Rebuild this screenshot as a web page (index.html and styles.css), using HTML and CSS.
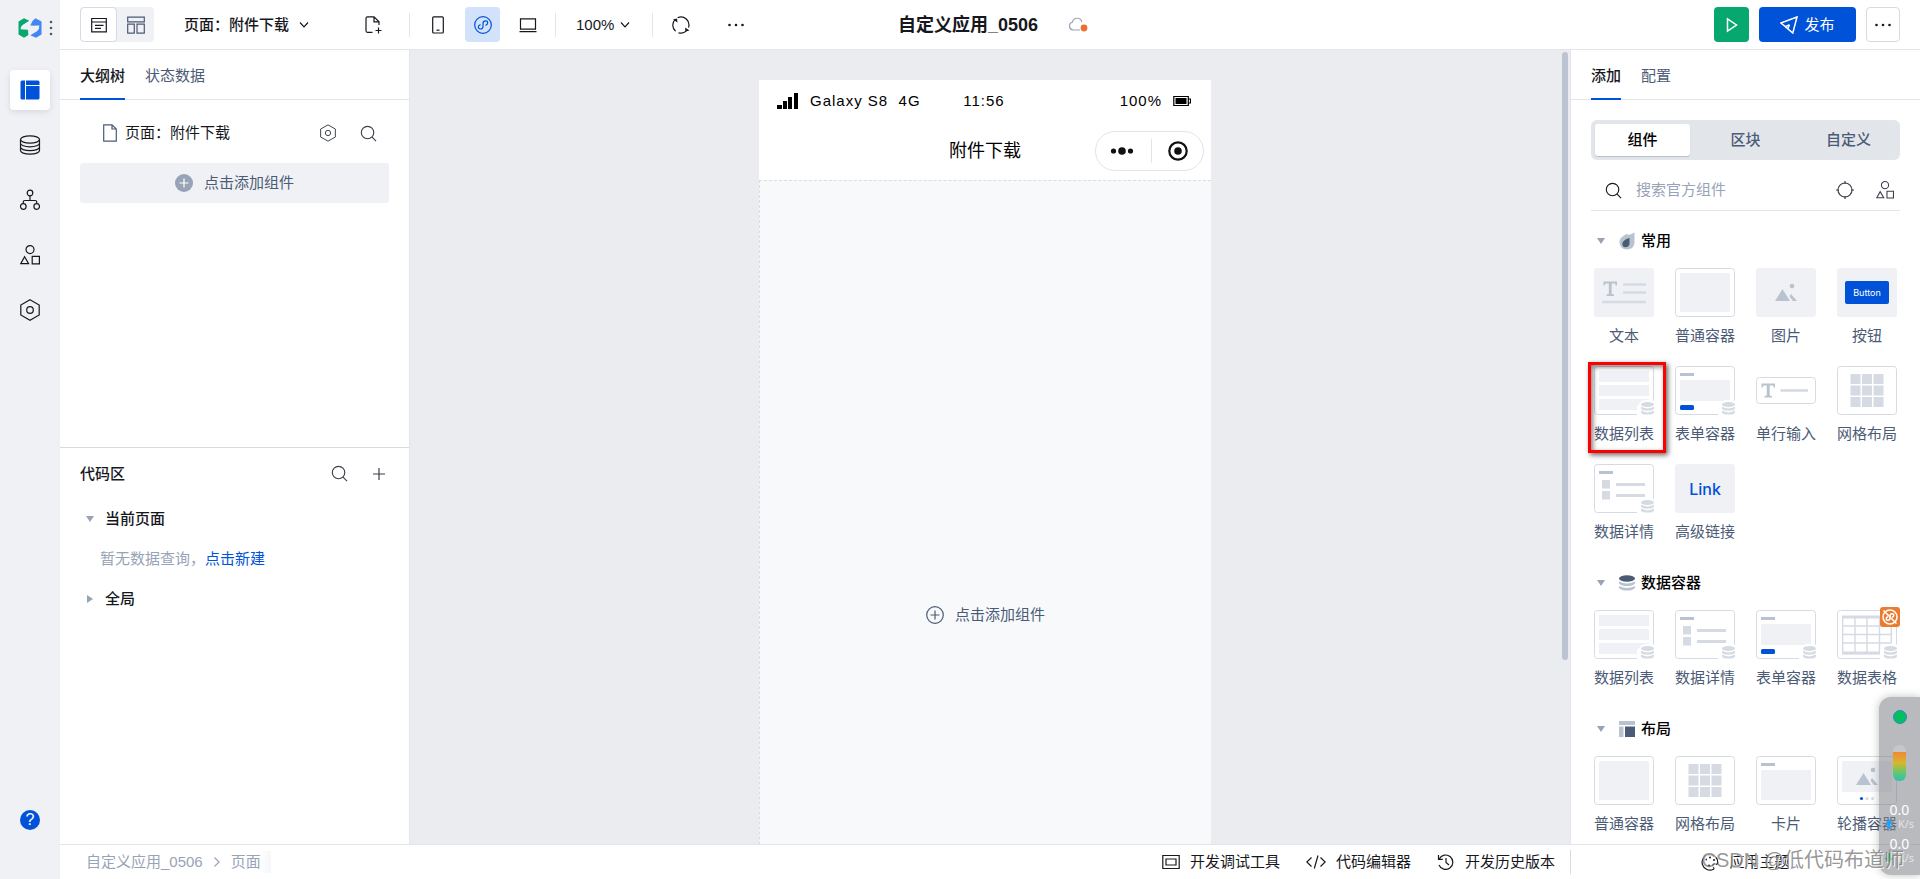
FILE: index.html
```html
<!DOCTYPE html>
<html lang="zh-CN">
<head>
<meta charset="utf-8">
<meta name="viewport" content="width=device-width, initial-scale=1">
<title>自定义应用_0506</title>
<link rel="stylesheet" href="styles.css">
</head>
<body>
<svg class="sprite" aria-hidden="true">
  <symbol id="search" viewBox="0 0 18 18"><circle cx="8" cy="8" r="6.6"/><path d="M12.8 12.8 17 17"/></symbol>
  <symbol id="shapes" viewBox="0 0 20 20"><circle cx="10" cy="4.6" r="4"/><path d="M4.6 11.8 8.6 18.6H.8zM12.2 11.4h7.2v7.4h-7.2z"/></symbol>
  <symbol id="hexagon" viewBox="0 0 20 22"><path d="M10 .8 19.2 6v10L10 21.2.8 16V6z"/><circle cx="10" cy="11" r="3.3"/></symbol>
  <symbol id="down" viewBox="0 0 10 8"><path d="M1 1.5 5 5.8 9 1.5"/></symbol>
  <symbol id="plus" viewBox="0 0 12 12"><path d="M6 0v12M0 6h12"/></symbol>
  <symbol id="dots" viewBox="0 0 16 4"><g fill="currentColor" stroke="none"><circle cx="1.5" cy="2" r="1.3"/><circle cx="8" cy="2" r="1.3"/><circle cx="14.5" cy="2" r="1.3"/></g></symbol>

  <symbol id="db-badge" viewBox="0 0 18 16">
    <path fill="#fff" d="M3 3C4-1 18-1 18 2v14H0V6z"/>
    <g fill="#d5dae3"><ellipse cx="10.500" cy="4.500" rx="6.500" ry="2.600"/><path d="M4 6.700q6.500 3.600 13 0v1.800q-1 2.200-6.500 2.200T4 8.500zM4 10.600q6.500 3.600 13 0v1.800q-1 2.200-6.500 2.200T4 12.400z"/></g>
  </symbol>
  <symbol id="t-text" viewBox="0 0 60 49"><rect width="60" height="49" rx="3" fill="#f0f1f5"/><path fill="#b9c3cf" d="M9.500 13.500h13.500v4h-1.200l-.8-2h-3.300V26l2.300.6V28h-7.500v-1.400l2.300-.6V15.500h-3.300l-.8 2H9.500z"/><path stroke="#d5dae3" stroke-width="2.600" d="M29 16.500h23M29 24.500h23M8 34h44"/></symbol>
  <symbol id="t-box" viewBox="0 0 60 49"><rect class="frame" x=".5" y=".5" width="59" height="48" rx="3"/><rect x="5" y="5" width="50" height="39" rx="1.500" fill="#f0f1f5"/></symbol>
  <symbol id="picture" viewBox="0 0 24 20"><path fill="#b9c3cf" d="M1 18 8.500 6 16 18zM17 11l6 7h-4.200l-3.300-4.500z"/><circle cx="18" cy="3" r="2.300" fill="#b9c3cf"/></symbol>
  <symbol id="t-image" viewBox="0 0 60 49"><rect width="60" height="49" rx="3" fill="#f0f1f5"/><use href="#picture" x="18" y="15" width="24" height="20"/></symbol>
  <symbol id="t-list" viewBox="0 0 60 49"><rect class="frame" x=".5" y=".5" width="59" height="48" rx="3"/><path fill="#f0f1f5" d="M5 5h50v11H5zM5 19h50v11H5zM5 33h50v11H5z"/><use href="#db-badge" x="43" y="34" width="18" height="16"/></symbol>
  <symbol id="t-form" viewBox="0 0 60 49"><rect class="frame" x=".5" y=".5" width="59" height="48" rx="3"/><path fill="#b9c3cf" d="M5 7h14v3H5z"/><rect x="5" y="14" width="50" height="21" rx="1.500" fill="#f0f1f5"/><rect x="5" y="39" width="14" height="5" rx="1.500" fill="#0052d9"/><use href="#db-badge" x="43" y="34" width="18" height="16"/></symbol>
  <symbol id="t-input" viewBox="0 0 60 49"><rect class="frame" x=".5" y="11.500" width="59" height="26" rx="3"/><path fill="#b9c3cf" d="M5.500 17.500h13.500v4h-1.200l-.8-2h-3.300v10l2.300.6V31.500H8.500V30l2.300-.6v-10H7.500l-.8 2H5.500z"/><path stroke="#d5dae3" stroke-width="2.600" d="M24.500 24.500H52"/></symbol>
  <symbol id="t-grid" viewBox="0 0 60 49"><rect class="frame" x=".5" y=".5" width="59" height="48" rx="3"/><path fill="#d5dae3" d="M13.500 8h10v10h-10zM25 8h10v10H25zM36.500 8h10v10h-10zM13.500 19.500h10v10h-10zM25 19.500h10v10H25zM36.500 19.500h10v10h-10zM13.500 31h10v10h-10zM25 31h10v10H25zM36.500 31h10v10h-10z"/></symbol>
  <symbol id="t-detail" viewBox="0 0 60 49"><rect class="frame" x=".5" y=".5" width="59" height="48" rx="3"/><path fill="#b9c3cf" d="M5 7h14v3H5z"/><path fill="#d5dae3" d="M8 16h8v8.500H8zM8 27h8v8.500H8zM22 19h29v3H22zM22 30h29v3H22z"/><use href="#db-badge" x="43" y="34" width="18" height="16"/></symbol>
  <symbol id="t-table" viewBox="0 0 60 49"><rect class="frame" x=".5" y=".5" width="59" height="48" rx="3"/><path fill="none" stroke="#d5dae3" stroke-width="1.400" d="M5.700 7v36.500H55M18 7v36M30 7v36M42.500 7v36M54.300 7v26M5 16h49M5 24.500h49M5 33h49"/><path stroke="#d5dae3" stroke-width="3" d="M5 7h50M5 43h40"/><use href="#db-badge" x="43" y="34" width="18" height="16"/></symbol>
  <symbol id="t-card" viewBox="0 0 60 49"><rect class="frame" x=".5" y=".5" width="59" height="48" rx="3"/><path fill="#b9c3cf" d="M5 7h14v3H5z"/><rect x="5" y="14" width="50" height="30" rx="1.500" fill="#f0f1f5"/></symbol>
  <symbol id="t-carousel" viewBox="0 0 60 49"><rect class="frame" x=".5" y=".5" width="59" height="48" rx="3"/><rect x="5" y="5" width="50" height="31" rx="1.500" fill="#f0f1f5"/><use href="#picture" x="18" y="11" width="24" height="20"/><circle cx="24.500" cy="42.500" r="1.600" fill="#0052d9"/><circle cx="30" cy="42.500" r="1.500" fill="#d5dae3"/><circle cx="35.500" cy="42.500" r="1.500" fill="#d5dae3"/></symbol>
</svg>

<div class="app">
  <nav class="rail" aria-label="主导航">
    <div class="brand">
      <svg width="24" height="20" viewBox="0 0 24 20"><path fill="#07a870" d="M6 .3 11.300 2.800 5 6.800Q2.500 8.800 2.800 10.800L9.500 9.500 10.500 17 6 19.700.5 16.500V3.500z"/><path fill="#4285f4" d="M17.500.3 23.500 3.500v13L18 19.700 12.300 17.200 19 13.200Q21.500 11.200 21.200 9.200L14.500 10.500 12 8 14.500 3z"/><path fill="#f0f1f5" d="M2.600 11.200Q3 8 6.500 6.300L13.500 3l-2 4.500 9.800-.4Q21.500 11 17.500 13.500L10.500 17l2.300-5z"/><path fill="#07a870" d="M2.500 12.500 10.500 12.500 8 17.500z"/><path fill="#4285f4" d="M21.500 7.500 13.500 7.500 16 2.500z"/></svg>
      <svg class="kebab" width="4" height="16" viewBox="0 0 4 16"><g fill="#4b5b76"><circle cx="2" cy="2" r="1.300"/><circle cx="2" cy="8" r="1.300"/><circle cx="2" cy="14" r="1.300"/></g></svg>
    </div>
    <button class="rail-button selected" aria-label="页面设计"><svg width="20" height="20" viewBox="0 0 20 20"><path fill="#0052d9" stroke="none" d="M2 .5h3V19.500H2A1.500 1.500 0 0 1 .5 18V2A1.500 1.500 0 0 1 2 .5zM6 .5h12A1.500 1.500 0 0 1 19.500 2v3H6zM6 6h13.500v12a1.500 1.500 0 0 1-1.500 1.500H6z"/></svg></button>
    <button class="rail-button" aria-label="数据源"><svg width="22" height="20" viewBox="0 0 22 20"><ellipse cx="11" cy="4.500" rx="9.500" ry="3.700"/><path d="M1.500 4.500v11c0 2 4 3.700 9.500 3.700s9.500-1.700 9.500-3.700v-11M1.500 8.200c0 2 4 3.700 9.500 3.700s9.500-1.700 9.500-3.700M1.500 12c0 2 4 3.700 9.500 3.700s9.500-1.700 9.500-3.700"/></svg></button>
    <button class="rail-button" aria-label="工作流"><svg width="20" height="22" viewBox="0 0 20 22"><circle cx="10" cy="4" r="2.800"/><circle cx="3.300" cy="17.500" r="2.800"/><circle cx="16.700" cy="17.500" r="2.800"/><path d="M10 7v4.500M3.300 14.500v-1.700q0-1.300 1.500-1.300h10.400q1.500 0 1.500 1.300v1.700"/></svg></button>
    <button class="rail-button" aria-label="组件库"><svg width="20" height="20"><use href="#shapes"/></svg></button>
    <button class="rail-button" aria-label="设置"><svg width="20" height="22"><use href="#hexagon"/></svg></button>
    <button class="help" aria-label="帮助">?</button>
  </nav>

  <header class="topbar">
    <div class="tools">
      <div class="mode">
        <button class="mode-button current" aria-label="页面视图"><svg width="16" height="16" viewBox="0 0 16 16"><path d="M.7 1.500h14.600v13.300H.7zM.7 5h14.600M4 8.300h8.500M4 11.300h6"/></svg></button>
        <button class="mode-button" aria-label="布局视图"><svg width="18" height="18" viewBox="0 0 18 18"><path d="M.7 1.200h16.600v4.600H.7zM.7 8.200h6.600v9H.7zM10 8.200h7.300v9H10z"/></svg></button>
      </div>
      <button class="page-picker">页面：附件下载<svg width="10" height="8"><use href="#down"/></svg></button>
      <button class="tool add-page" aria-label="新建页面"><svg width="18" height="18" viewBox="0 0 18 18"><path d="M7.500 16.300h-5q-1.500 0-1.500-1.500V2.200Q1 .8 2.500.8H9l5 5V9M9 .8v5h5M13.500 11.500v6M10.500 14.500h6"/></svg></button>
      <span class="rule"></span>
      <button class="tool" aria-label="手机"><svg width="12" height="18" viewBox="0 0 12 18"><rect x=".7" y=".8" width="10.600" height="16.200" rx="1"/><path d="M4.500 14.200h3"/></svg></button>
      <button class="tool active" aria-label="小程序"><svg width="18" height="18" viewBox="0 0 18 18"><circle cx="9" cy="9" r="8.300"/><path d="M6.500 8.600C3.500 9.400 3.700 13 6.400 13 8 13 9 12 9 10.500v-3C9 6 10 4.900 11.600 4.900c2.700 0 2.900 3.600-.1 4.400"/></svg></button>
      <button class="tool" aria-label="电脑"><svg width="18" height="16" viewBox="0 0 18 16"><path d="M1.500 1.800h15v10.400h-15zM.5 14.700h17"/></svg></button>
      <span class="rule"></span>
      <button class="zoom">100%<svg width="10" height="8"><use href="#down"/></svg></button>
      <span class="rule"></span>
      <button class="tool" aria-label="刷新"><svg width="18" height="18" viewBox="0 0 18 18"><path d="M3.600 15.300A8 8 0 0 1 3 3.700M5.600 1.700A8 8 0 0 1 16.500 11.500M14.600 14.700a8 8 0 0 1-8.200 2M14.400 2.900a8 8 0 0 1 2.600 6"/><path fill="currentColor" stroke="none" d="m1 3.500 4-1 .5 4zM17.500 14.500l-4 1-.5-4z"/></svg></button>
      <button class="tool dots" aria-label="更多工具"><svg width="16" height="4"><use href="#dots"/></svg></button>
    </div>
    <div class="title">
      <h1>自定义应用_0506</h1>
      <svg width="20" height="16" viewBox="0 0 20 16"><path stroke="#9aa5b8" d="M12 13H5a4 4 0 0 1-.6-7.800A4.800 4.800 0 0 1 13.800 5"/><circle cx="16" cy="11" r="3.400" fill="#ed7033" stroke="none"/></svg>
    </div>
    <div class="actions">
      <button class="run" aria-label="预览"><svg width="12" height="16" viewBox="0 0 12 16"><path d="M1.500 2v12L10.500 8z"/></svg></button>
      <button class="publish"><svg width="18" height="18" viewBox="0 0 18 18"><path d="M17 1 .8 7l4.700 3.700v.1L12.800 17zM5.500 10.700l4-2M7.800 12.800 9.500 8.700"/></svg>发布</button>
      <button class="more" aria-label="更多"><svg width="16" height="4"><use href="#dots"/></svg></button>
    </div>
  </header>

  <aside class="left">
    <section class="outline">
      <div class="tabs" role="tablist">
        <button class="tab current" role="tab" aria-selected="true">大纲树</button>
        <button class="tab" role="tab">状态数据</button>
      </div>
      <div class="page-row">
        <svg class="page-icon" width="14" height="18" viewBox="0 0 14 18"><path d="M.7.800H9L13.300 5v12.200H.7zM9 .8V5h4.300"/></svg>
        <span class="grow">页面：附件下载</span>
        <button class="icon-button" aria-label="页面设置"><svg width="16" height="18"><use href="#hexagon"/></svg></button>
        <button class="icon-button" aria-label="搜索"><svg width="17" height="17"><use href="#search"/></svg></button>
      </div>
      <button class="add-component"><svg width="18" height="18" viewBox="0 0 18 18"><circle cx="9" cy="9" r="9" fill="#97a3b7" stroke="none"/><path stroke="#fff" d="M9 4.500v9M4.500 9h9"/></svg>点击添加组件</button>
    </section>
    <section class="code">
      <div class="code-head">
        <h2>代码区</h2>
        <button class="icon-button" aria-label="搜索代码"><svg width="17" height="17"><use href="#search"/></svg></button>
        <button class="icon-button" aria-label="新建代码"><svg width="12" height="12"><use href="#plus"/></svg></button>
      </div>
      <button class="tree"><span class="caret"></span>当前页面</button>
      <p class="empty">暂无数据查询，<a href="#">点击新建</a></p>
      <button class="tree"><span class="caret closed"></span>全局</button>
    </section>
  </aside>

  <main class="stage">
    <div class="phone">
      <div class="status">
        <span class="carrier"><svg width="22" height="16" viewBox="0 0 22 16"><path fill="#000" stroke="none" d="M0 12h5v4H0zM6 8h4v8H6zM11 4h4v12h-4zM17 0h4v16h-4z"/></svg>Galaxy S8&nbsp; 4G</span>
        <span>11:56</span>
        <span class="battery">100%<svg width="18" height="12" viewBox="0 0 18 12"><path d="M.8 1.500h14.500v9H.8zM15.500 4h2v4h-2"/><path fill="#000" stroke="none" d="M2.500 3h11v6h-11z"/></svg></span>
      </div>
      <div class="nav">
        <span></span>
        <span>附件下载</span>
        <div class="capsule">
          <svg width="24" height="10" viewBox="0 0 24 10"><g fill="#111" stroke="none"><circle cx="3.500" cy="5" r="2.600"/><circle cx="12" cy="5" r="3.800"/><circle cx="20.500" cy="5" r="2.600"/></g></svg>
          <span class="capsule-rule"></span>
          <svg width="20" height="20" viewBox="0 0 20 20"><circle cx="10" cy="10" r="8.700" stroke="#111" stroke-width="2.200"/><circle cx="10" cy="10" r="3.800" fill="#111" stroke="none"/></svg>
        </div>
      </div>
      <div class="drop"><svg width="18" height="18" viewBox="0 0 18 18"><circle cx="9" cy="9" r="8.300"/><path d="M9 4.500v9M4.500 9h9"/></svg>点击添加组件</div>
    </div>
    <div class="scroll-track"><div class="scroll-thumb"></div></div>
  </main>

  <aside class="right">
    <div class="tabs" role="tablist">
      <button class="tab current" role="tab" aria-selected="true">添加</button>
      <button class="tab" role="tab">配置</button>
    </div>
    <div class="right-body">
      <div class="segments">
        <button class="segment current">组件</button>
        <button class="segment">区块</button>
        <button class="segment">自定义</button>
      </div>
      <div class="search">
        <svg width="17" height="17"><use href="#search"/></svg>
        <input type="text" placeholder="搜索官方组件" aria-label="搜索官方组件">
        <button class="icon-button" aria-label="定位"><svg width="18" height="18" viewBox="0 0 18 18"><circle cx="9" cy="9" r="7"/><path d="M9 0v3M9 15v3M0 9h3M15 9h3"/></svg></button>
        <button class="icon-button" aria-label="组件库"><svg width="18" height="18"><use href="#shapes"/></svg></button>
      </div>

      <section class="group">
        <h3><span class="caret"></span><svg width="16" height="18" viewBox="0 0 16 18"><path fill="#b9c3cf" stroke="none" d="M8.500 1.500V3Q12 2.500 15.500.5V11Q14.500 17.500 8 17.500T.3 10.500Q.5 5 8.500 1.500z"/><path fill="#4b5b76" stroke="none" d="M10.500 6v6q-.8 3.300-4 3.300T3.300 11.800Q3.500 8 10.500 6z"/></svg>常用</h3>
        <div class="items">
          <button class="item"><svg><use href="#t-text"/></svg>文本</button>
          <button class="item"><svg><use href="#t-box"/></svg>普通容器</button>
          <button class="item"><svg><use href="#t-image"/></svg>图片</button>
          <button class="item"><span class="thumb"><span class="thumb-button">Button</span></span>按钮</button>
          <button class="item marked"><svg><use href="#t-list"/></svg>数据列表</button>
          <button class="item"><svg><use href="#t-form"/></svg>表单容器</button>
          <button class="item"><svg><use href="#t-input"/></svg>单行输入</button>
          <button class="item"><svg><use href="#t-grid"/></svg>网格布局</button>
          <button class="item"><svg><use href="#t-detail"/></svg>数据详情</button>
          <button class="item"><span class="thumb thumb-link">Link</span>高级链接</button>
        </div>
      </section>

      <section class="group">
        <h3><span class="caret"></span><svg width="16" height="18" viewBox="0 0 16 18"><ellipse cx="8" cy="4.500" rx="8" ry="3.300" fill="#4b5b76" stroke="none"/><path fill="#b9c3cf" stroke="none" d="M0 7.500q8 4 16 0v1.700q-1.500 2.800-8 2.800T0 9.200zM0 12q8 4 16 0v1.700q-1.500 2.800-8 2.800T0 13.700z"/></svg>数据容器</h3>
        <div class="items">
          <button class="item"><svg><use href="#t-list"/></svg>数据列表</button>
          <button class="item"><svg><use href="#t-detail"/></svg>数据详情</button>
          <button class="item"><svg><use href="#t-form"/></svg>表单容器</button>
          <button class="item"><svg><use href="#t-table"/></svg>数据表格
            <span class="corner"><svg viewBox="0 0 20 20"><rect width="20" height="20" rx="3" fill="#ed7b2f"/><g fill="none" stroke="#fff" stroke-width="1.500"><circle cx="10" cy="10" r="7"/><path d="M8 9.700c-2.500.7-2.300 3.600-.2 3.600 1.300 0 2.200-.8 2.200-2V8.700c0-1.200.9-2 2.200-2 2.100 0 2.300 2.900-.2 3.600"/><path d="M3.500 3.500l13 13"/></g></svg></span>
          </button>
        </div>
      </section>

      <section class="group">
        <h3><span class="caret"></span><svg width="16" height="18" viewBox="0 0 16 18"><path fill="#b9c3cf" stroke="none" d="M0 1h16v4H0zM0 6.500h4.500V17H0z"/><path fill="#4b5b76" stroke="none" d="M6 6.500h10V17H6z"/></svg>布局</h3>
        <div class="items">
          <button class="item"><svg><use href="#t-box"/></svg>普通容器</button>
          <button class="item"><svg><use href="#t-grid"/></svg>网格布局</button>
          <button class="item"><svg><use href="#t-card"/></svg>卡片</button>
          <button class="item"><svg><use href="#t-carousel"/></svg>轮播容器</button>
        </div>
      </section>
    </div>
  </aside>

  <footer class="footer">
    <div class="crumbs"><span>自定义应用_0506</span><svg width="8" height="12" viewBox="0 0 8 12"><path d="m1.500 1.500 4.500 4.500-4.500 4.500"/></svg><span class="crumb-last">页面</span></div>
    <div class="dev">
      <button><svg width="18" height="16" viewBox="0 0 18 16"><path d="M.8 1.500h16.400v13H.8zM4 5h10v6H4z"/></svg>开发调试工具</button>
      <button><svg width="20" height="14" viewBox="0 0 20 14"><path d="M5.500 2.500.8 7l4.700 4.500M14.500 2.500 19.200 7l-4.700 4.500M12 .5 8.300 13.500"/></svg>代码编辑器</button>
      <button><svg width="18" height="16" viewBox="0 0 18 16"><path d="M2.200 5A7.200 7.200 0 1 1 2 11M1.500 1v4.300h4.300M9 4v4.500l3 2.500"/></svg>开发历史版本</button>
    </div>
    <div class="theme">
      <button><svg width="18" height="18" viewBox="0 0 18 18"><path d="M12.500 16.300A7.800 7.800 0 1 1 16.700 10q-.5 1.800-2.500 1.300t-2.500 1.200q0 1 .8 2t0 1.800z"/><g fill="currentColor" stroke="none"><circle cx="5" cy="6.500" r="1"/><circle cx="9" cy="4.500" r="1"/><circle cx="13" cy="7" r="1"/><circle cx="8" cy="13" r="1.500"/></g></svg>应用主题</button>
    </div>
  </footer>
</div>

<div class="monitor">
  <span class="led"></span>
  <span class="gauge"></span>
  <div class="speeds">
    <strong>0.0</strong>
    <span><svg width="8" height="10" viewBox="0 0 8 10"><path fill="#1aa3ff" d="M4 0 8 5H5.500v5h-3V5H0z"/></svg>K/s</span>
    <strong>0.0</strong>
    <span><svg width="8" height="10" viewBox="0 0 8 10"><path fill="#12a65c" d="M4 10 0 5h2.500V0h3v5H8z"/></svg>K/s</span>
  </div>
</div>
<div class="watermark">CSDN @低代码布道师</div>
</body>
</html>
```
FILE: styles.css
```css
* { box-sizing: border-box; }

body {
  margin: 0;
  overflow: hidden;
  background: #fff;
  color: #16181d;
  font: 15px/22px "Liberation Sans", "Noto Sans CJK SC", sans-serif;
}

h1, h2, h3, p { margin: 0; }

button {
  display: inline-flex;
  align-items: center;
  justify-content: center;
  padding: 0;
  border: 0;
  background: none;
  color: inherit;
  font: inherit;
  white-space: nowrap;
  cursor: pointer;
}

svg {
  flex: none;
  fill: none;
  stroke: currentColor;
  stroke-width: 1.2;
}

.brand svg, .monitor svg, .item svg { stroke: none; }
.sprite { position: absolute; width: 0; height: 0; }
.frame { fill: #fff; stroke: #d5dae3; stroke-width: 1; }

.app {
  display: grid;
  grid-template-columns: 60px 350px minmax(0, 1fr) 350px;
  grid-template-rows: 50px minmax(0, 1fr) 35px;
  height: 100vh;
}

/* Navigation rail */
.rail {
  grid-row: 1 / 4;
  display: flex;
  flex-direction: column;
  align-items: center;
  gap: 15px;
  padding-bottom: 49px;
  background: #f0f1f5;
}
.brand {
  display: flex;
  align-items: center;
  align-self: stretch;
  gap: 7px;
  height: 55px;
  padding-left: 18px;
}
.rail-button { width: 40px; height: 40px; border-radius: 4px; }
.rail-button.selected { background: #fff; box-shadow: 0 2px 6px rgba(0, 20, 60, .1); }
.help {
  width: 20px;
  height: 20px;
  margin-top: auto;
  border-radius: 50%;
  background: #0052d9;
  color: #fff;
  font-size: 16px;
}

/* Top bar */
.topbar {
  grid-column: 2 / 5;
  display: grid;
  grid-template-columns: 1fr auto 1fr;
  align-items: center;
  padding: 0 20px;
  border-bottom: 1px solid #e2e5eb;
}
.tools, .actions, .title { display: flex; align-items: center; }
.mode { display: flex; height: 35px; border-radius: 4px; background: #f0f1f5; }
.mode-button { width: 37px; border: 1px solid transparent; border-radius: 4px; color: #4b5b76; }
.mode-button.current { border-color: #d5dae3; background: #fff; color: #16181d; }
.page-picker { gap: 10px; margin-left: 30px; font-weight: 500; }
.tool { width: 35px; height: 35px; margin-right: 10px; border-radius: 4px; }
.tool.active { background: #d2e2fb; color: #0052d9; }
.tool.add-page { margin: 0 18px 0 47px; }
.tool.dots { margin-left: 10px; }
.rule { width: 1px; height: 24px; margin-right: 10px; background: #e2e5eb; }
.zoom { gap: 6px; margin: 0 22px 0 10px; }
.title { gap: 30px; padding-left: 6px; }
.title h1 { font-size: 18px; font-weight: 700; line-height: 24px; }
.actions { justify-content: flex-end; gap: 10px; }
.run, .publish, .more { height: 35px; border-radius: 4px; color: #fff; }
.run { width: 35px; background: #07a870; }
.publish { gap: 6px; width: 97px; background: #0052d9; }
.run svg, .publish svg { stroke-width: 1.5; }
.more { width: 34px; border: 1px solid #d5dae3; color: #16181d; }

/* Shared panel tabs */
.tabs {
  display: flex;
  gap: 20px;
  height: 50px;
  padding: 0 20px;
  border-bottom: 1px solid #e2e5eb;
}
.tab { height: 50px; padding-top: 4px; border-bottom: 2px solid transparent; color: #4b5b76; }
.tab.current { border-color: #0052d9; color: #16181d; font-weight: 500; }
.icon-button { width: 20px; height: 24px; color: #3a3f4a; }

.caret {
  width: 0;
  height: 0;
  border: 4px solid transparent;
  border-top: 6px solid #97a3b7;
  border-bottom: 0;
}
.caret.closed {
  margin: 0 1px;
  border: 4px solid transparent;
  border-right: 0;
  border-left: 6px solid #97a3b7;
}

/* Left panel */
.left {
  display: flex;
  flex-direction: column;
  border-right: 1px solid #e2e5eb;
}
.outline { flex: 397; }
.code { flex: 397; border-top: 1px solid #d5dae3; }
.page-row { display: flex; align-items: center; gap: 20px; padding: 21px 31px 18px 43px; }
.page-icon { margin-right: -12px; color: #4b5b76; }
.grow { flex: 1; }
.add-component {
  display: flex;
  gap: 11px;
  width: calc(100% - 40px);
  height: 40px;
  margin: 0 20px;
  border-radius: 3px;
  background: #f0f1f5;
  color: #4b5b76;
}
.code-head { display: flex; align-items: center; gap: 20px; padding: 14px 20px 16px; }
.code-head h2 { flex: 1; font-size: 15px; font-weight: 500; line-height: 22px; }
.tree { display: flex; gap: 11px; height: 34px; padding-left: 26px; font-weight: 500; }
.empty { padding: 12px 40px; color: #97a3b7; }
.empty a { color: #0052d9; text-decoration: none; }

/* Canvas */
.stage {
  position: relative;
  display: flex;
  justify-content: center;
  overflow: hidden;
  padding: 30px 10px 0 0;
  background: #ebecf0;
}
.phone {
  display: flex;
  flex-direction: column;
  width: 452px;
  height: 970px;
  background: #fff;
  color: #000;
}
.status {
  display: grid;
  grid-template-columns: 1fr auto 1fr;
  height: 42px;
  padding: 0 20px 0 18px;
  align-items: center;
  letter-spacing: 1px;
}
.carrier, .battery { display: flex; align-items: center; gap: 11px; }
.battery { justify-content: flex-end; }
.nav {
  display: grid;
  grid-template-columns: 1fr auto 1fr;
  align-items: center;
  height: 58px;
  padding: 0 7px;
  font-size: 18px;
}
.capsule {
  display: flex;
  align-items: center;
  justify-content: space-between;
  justify-self: end;
  width: 109px;
  height: 40px;
  padding: 0 15px 0 14px;
  border: 1px solid #e2e4ea;
  border-radius: 20px;
}
.capsule-rule { width: 1px; height: 24px; background: #e2e4ea; }
.drop {
  display: flex;
  flex: 1;
  align-items: center;
  justify-content: center;
  gap: 11px;
  border: 1px dashed #dcdcdc;
  border-right: 0;
  background: #f8f9fb;
  color: #4b5b76;
}
.scroll-track {
  position: absolute;
  top: 0;
  right: 0;
  bottom: 0;
  width: 10px;
  padding: 2px;
}
.scroll-thumb { width: 6px; height: 77%; border-radius: 3px; background: #bbc4d0; }

/* Component library */
.right { overflow: hidden; border-left: 1px solid #e2e5eb; }
.right-body { padding: 20px; }
.segments {
  display: grid;
  grid-template-columns: repeat(3, 1fr);
  gap: 8px;
  height: 40px;
  padding: 4px;
  border-radius: 6px;
  background: #e2e5ea;
}
.segment { border-radius: 3px; color: #4b5b76; font-weight: 500; }
.segment.current { background: #fff; color: #000; box-shadow: 0 1px 1px #b9c3cf; }
.search {
  display: flex;
  align-items: center;
  gap: 20px;
  height: 51px;
  padding: 10px 5px 0 14px;
  border-bottom: 1px solid #e2e5eb;
}
.search input {
  flex: 1;
  min-width: 0;
  margin-left: -6px;
  padding: 0;
  border: 0;
  outline: 0;
  font: inherit;
}
.search input::placeholder { color: #97a3b7; }
.group { margin-bottom: 28px; }
.search + .group { margin-top: 18px; }
.group h3 {
  display: flex;
  align-items: center;
  gap: 6px;
  height: 24px;
  margin-bottom: 15px;
  padding-left: 6px;
  color: #000;
  font-size: 15px;
  font-weight: 500;
}
.group h3 .caret { margin-right: 8px; }
.items {
  display: grid;
  grid-template-columns: repeat(4, 60px);
  justify-content: space-between;
  gap: 19px 0;
  padding: 0 3px;
}
.item { position: relative; flex-direction: column; gap: 8px; color: #4b5b76; }
.item svg { width: 60px; height: 49px; }
.thumb {
  display: flex;
  align-items: center;
  justify-content: center;
  width: 60px;
  height: 49px;
  border-radius: 3px;
  background: #f0f1f5;
}
.thumb-link { color: #0052d9; font: 500 16px/20px Inter, sans-serif; }
.thumb-button {
  width: 44px;
  border-radius: 2px;
  background: #0052d9;
  color: #fff;
  font: 9px/23px Inter, sans-serif;
}
.item .corner {
  position: absolute;
  top: -3px;
  right: -3px;
  display: flex;
}
.item .corner svg { width: 20px; height: 20px; }
.marked::after {
  content: "";
  position: absolute;
  inset: -4px -12px -8px -6px;
  border: 3px solid #f00;
  box-shadow: 2px 2px 5px rgba(0, 0, 0, .6), inset 2px 2px 5px rgba(0, 0, 0, .5);
}

/* Footer */
.footer {
  grid-column: 2 / 5;
  display: grid;
  grid-template-columns: 1fr auto 350px;
  align-items: center;
  border-top: 1px solid #e2e5eb;
}
.crumbs { display: flex; align-items: center; gap: 10px; padding-left: 26px; color: #97a3b7; }
.crumb-last { padding-right: 10px; background: linear-gradient(90deg, #fff 70%, #f6f7f9); }
.dev { display: flex; gap: 26px; padding-right: 15px; }
.dev button, .theme button { gap: 10px; }
.theme {
  display: flex;
  justify-content: center;
  height: 24px;
  border-left: 1px solid #d5dae3;
}

/* Network monitor overlay */
.monitor {
  position: absolute;
  right: 0;
  bottom: 4px;
  display: flex;
  flex-direction: column;
  align-items: center;
  width: 41px;
  height: 178px;
  border-radius: 12px 0 0 12px;
  background: rgba(128, 130, 135, .55);
  box-shadow: 0 0 8px rgba(0, 0, 0, .25);
  color: #fff;
}
.led {
  width: 14px;
  height: 14px;
  margin: 13px 0;
  border: 1px solid #3b82c4;
  border-radius: 50%;
  background: #00c060;
}
.gauge {
  width: 13px;
  height: 36px;
  margin: 8px 0 21px;
  border-radius: 6px;
  background: linear-gradient(#c4c6ca 20%, #ef8a32 20%, #d8b62c 50%, #66c96a 75%, #34bdb5);
}
.speeds { display: flex; flex-direction: column; align-items: center; }
.speeds strong { font: 14px/15px "Noto Sans", sans-serif; }
.speeds span {
  display: flex;
  align-items: center;
  gap: 5px;
  margin-bottom: 6px;
  color: #e2e3e6;
  font: 11px/13px "Noto Sans", sans-serif;
}
.watermark {
  position: absolute;
  right: 16px;
  bottom: 6px;
  color: rgba(125, 125, 125, .8);
  font-size: 20px;
  line-height: 26px;
  text-shadow: 1px 1px 0 rgba(255, 255, 255, .8);
  pointer-events: none;
}
```
